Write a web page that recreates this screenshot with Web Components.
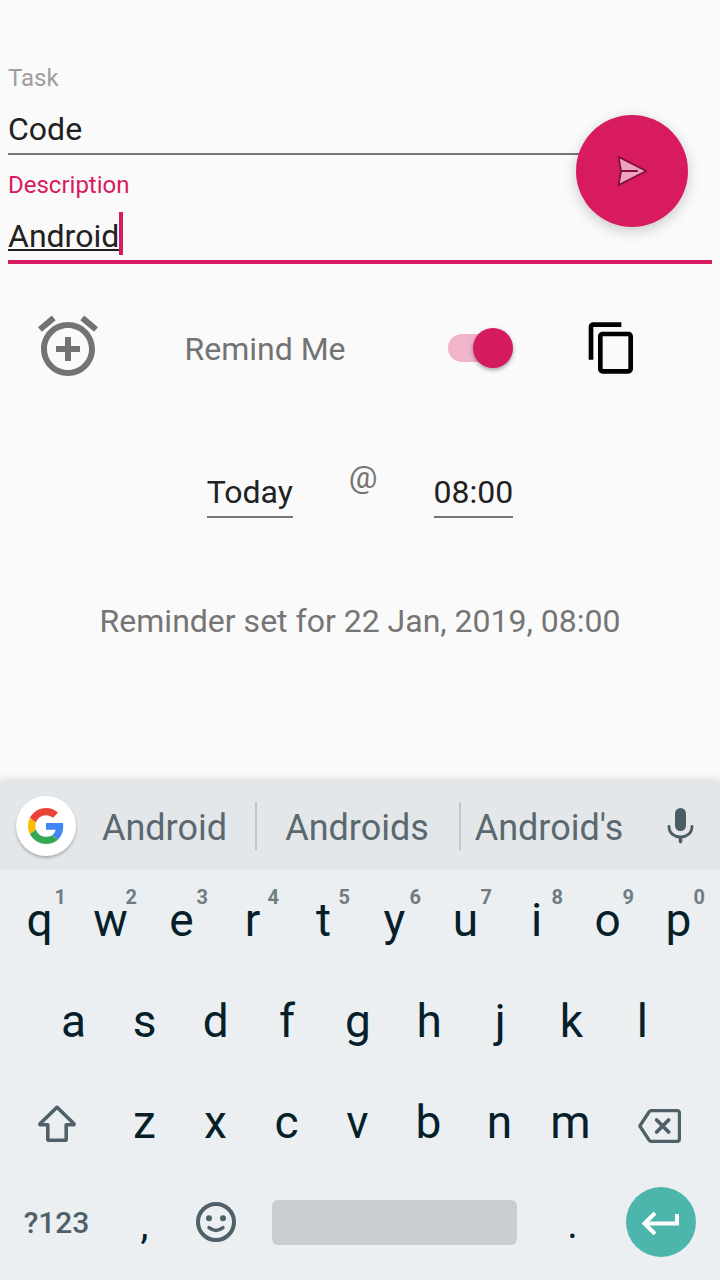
<!DOCTYPE html>
<html lang="en">
<head>
<meta charset="utf-8">
<meta name="viewport" content="width=device-width, initial-scale=1">
<title>Task</title>
<style>
  body { margin: 0; background: #fafafa; font-family: Roboto, "Liberation Sans", sans-serif; }
</style>
</head>
<body>
<task-screen></task-screen>

<script>
const define = (name, html, setup) => {
  const template = document.createElement('template');
  template.innerHTML = html;
  customElements.define(name, class extends HTMLElement {
    connectedCallback() {
      if (this.shadowRoot) return;
      this.attachShadow({ mode: 'open' }).append(template.content.cloneNode(true));
      if (setup) setup(this, this.shadowRoot);
    }
  });
};

// Labelled text field with a rule below it; "active" adds the accent colour and the caret.
define('text-field', `
  <style>
    :host { display: block; --accent: #d81b60; }
    label { display: block; font-size: 24px; line-height: 28px; color: #9e9e9e; margin-bottom: 18px; }
    .line { display: flex; align-items: flex-end; height: 38px; padding-bottom: 5px; border-bottom: 2px solid #757575; }
    input { flex: 1; min-width: 0; height: 38px; padding: 0; border: 0; outline: 0; background: none;
            font: inherit; font-size: 32px; line-height: 38px; color: #212121; }
    .caret { display: none; width: 4px; height: 43px; background: var(--accent); }
    :host([active]) label { color: var(--accent); }
    :host([active]) .line { border-bottom: 4px solid var(--accent); }
    :host([active]) input { flex: none; field-sizing: content; text-decoration: underline 2px;
                            text-underline-offset: 2px; text-decoration-skip-ink: none; }
    :host([active]) .caret { display: block; }
  </style>
  <label for="box"><slot></slot></label>
  <div class="line"><input id="box" type="text" spellcheck="false"><span class="caret"></span></div>
`, (host, root) => { root.querySelector('input').value = host.getAttribute('value'); });

// Short value sized to its text, used for the date and the time.
define('picker-field', `
  <style>
    :host { display: block; padding-top: 15px; }
    input { display: block; box-sizing: border-box; height: 45px; padding: 0 0 5px; border: 0; border-bottom: 2px solid #757575;
            border-radius: 0; outline: 0; background: none; field-sizing: content; font: inherit;
            font-size: 32px; line-height: 38px; color: #212121; }
  </style>
  <input type="text" readonly>
`, (host, root) => {
  const input = root.querySelector('input');
  input.value = host.getAttribute('value');
  input.setAttribute('aria-label', host.getAttribute('label'));
});

define('send-button', `
  <style>
    :host { display: block; }
    button { display: grid; place-items: center; width: 112px; height: 112px; padding: 0; border: 0; border-radius: 50%;
             background: #d81b60; box-shadow: 0 4px 14px rgba(0,0,0,.2); }
  </style>
  <button type="button" aria-label="Save task">
    <svg width="32" height="32" viewBox="0 0 32 32" fill="#f0a3c0" stroke="#7d1040" stroke-width="1.8" stroke-linejoin="round" stroke-linecap="round">
      <path d="M2.600 1.900 30.200 16 2.600 30.100 5 16Z"/><path d="M5 16h16" stroke-width="2.2"/>
    </svg>
  </button>
`);

define('remind-row', `
  <style>
    :host { display: grid; grid-template-columns: 136fr 258fr 172fr 92fr 62fr; align-items: center; justify-items: center; height: 76px; }
    svg { display: block; }
    .alarm { align-self: start; }
    label { font-size: 32px; line-height: 40px; padding-top: 2px; color: #737373; }
    input { appearance: none; display: grid; align-items: center; width: 65px; height: 40px; margin: 0; }
    input::before, input::after { content: ""; grid-area: 1 / 1; }
    input::before { width: 60px; height: 28px; border-radius: 14px; background: #f0b5ca; }
    input::after { width: 40px; height: 40px; border-radius: 50%; background: #bdbdbd; box-shadow: 0 2px 4px rgba(0,0,0,.35); }
    input:checked::after { justify-self: end; background: #d51b5f; }
    button { padding: 0; border: 0; background: none; }
  </style>
  <svg class="alarm" width="72" height="72" viewBox="0 0 24 24" fill="#737373"><path d="M7.88 3.39 6.6 1.86 2 5.71l1.29 1.53 4.59-3.85zM22 5.72l-4.6-3.86-1.29 1.53 4.6 3.86L22 5.72zM12 4c-4.97 0-9 4.03-9 9s4.02 9 9 9c4.97 0 9-4.03 9-9s-4.03-9-9-9zm0 16c-3.87 0-7-3.13-7-7s3.13-7 7-7 7 3.13 7 7-3.13 7-7 7zm1-11h-2v3H8v2h3v3h2v-3h3v-2h-3V9z"/></svg>
  <label for="remind">Remind Me</label>
  <input id="remind" type="checkbox" role="switch" checked>
  <button type="button" aria-label="Copy">
    <svg width="56" height="56" viewBox="0 0 24 24"><path d="M16 1H4c-1.1 0-2 .9-2 2v14h2V3h12V1zm3 4H8c-1.1 0-2 .9-2 2v14c0 1.1.9 2 2 2h11c1.1 0 2-.9 2-2V7c0-1.1-.9-2-2-2zm0 16H8V7h11v14z"/></svg>
  </button>
`);

define('suggestion-bar', `
  <style>
    :host { display: grid; grid-template-columns: 76fr 179fr 204fr 180fr 81fr; align-items: center; height: 89px; background: #e3e7ea; }
    button { padding: 0; border: 0; background: none; font: inherit; }
    svg { display: block; }
    .google { justify-self: end; display: grid; place-items: center; width: 60px; height: 60px; border-radius: 50%;
              background: #fff; box-shadow: 0 2px 3px rgba(0,0,0,.25); }
    .word { height: 48px; padding: 4px 2px 0 0; font-size: 36px; line-height: 44px; color: #5b686f; white-space: nowrap; text-align: center; }
    .word + .word { border-left: 2px solid #c3c8cb; }
    .mic { justify-self: center; }
  </style>
  <button class="google" type="button" aria-label="Google search">
    <svg width="36" height="36" viewBox="0 0 48 48">
      <path fill="#ea4335" d="M24 9.5c3.54 0 6.71 1.22 9.21 3.6l6.85-6.85C35.9 2.38 30.47 0 24 0 14.62 0 6.51 5.38 2.56 13.22l7.98 6.19C12.43 13.72 17.74 9.5 24 9.5z"/>
      <path fill="#4285f4" d="M46.98 24.55c0-1.57-.15-3.09-.38-4.55H24v9.02h12.94c-.58 2.96-2.26 5.48-4.78 7.18l7.73 6c4.51-4.18 7.09-10.36 7.09-17.65z"/>
      <path fill="#fbbc05" d="M10.53 28.59c-.48-1.45-.76-2.99-.76-4.59s.27-3.14.76-4.59l-7.98-6.19C.92 16.46 0 20.12 0 24c0 3.88.92 7.54 2.56 10.78l7.97-6.19z"/>
      <path fill="#34a853" d="M24 48c6.48 0 11.93-2.13 15.89-5.81l-7.73-6c-2.15 1.45-4.92 2.3-8.16 2.3-6.26 0-11.57-4.22-13.47-9.91l-7.98 6.19C6.51 42.62 14.62 48 24 48z"/>
    </svg>
  </button>
  <button class="word" type="button">Android</button>
  <button class="word" type="button">Androids</button>
  <button class="word" type="button">Android's</button>
  <button class="mic" type="button" aria-label="Voice input">
    <svg width="28" height="36" viewBox="0 0 28 36" fill="none" stroke="#4b5c64" stroke-linecap="round">
      <rect x="9" y="0" width="11" height="23" rx="5.5" fill="#4b5c64" stroke="none"/>
      <path d="M3 18.500c0 14 23 14 23 0" stroke-width="2.8"/><path d="M14.500 30v3.600" stroke-width="3.600"/>
    </svg>
  </button>
`);

// One key: its face is the slotted text or icon, its hint the small digit at the corner.
define('key-cap', `
  <style>
    :host { display: block; position: relative; }
    button { box-sizing: border-box; display: grid; place-items: center; width: 100%; height: 100%; padding: 0; border: 0; background: none;
             font: inherit; font-size: 46px; line-height: 52px; color: #06202a; }
    :host([kind="letter"]) button { padding-bottom: 2px; }
    :host([kind="mark"]) button { font-size: 40px; padding-top: 6px; }
    :host([kind="mode"]) button { font-size: 30px; font-weight: 500; color: #4f6068; padding-top: 2px; }
    .hint { position: absolute; top: 15px; right: 9px; font-size: 20px; line-height: 24px; font-weight: 700; color: #707c82; }
  </style>
  <button type="button"><slot></slot></button><span class="hint"></span>
`, (host, root) => {
  const hint = root.querySelector('.hint');
  if (host.hasAttribute('hint')) hint.textContent = host.getAttribute('hint'); else hint.remove();
  if (host.hasAttribute('label')) root.querySelector('button').setAttribute('aria-label', host.getAttribute('label'));
});

const keys = (letters, digits = '') => [...letters].map((c, i) =>
  `<key-cap kind="letter"${digits[i] ? ` hint="${digits[i]}"` : ''}>${c}</key-cap>`).join('');

define('soft-keyboard', `
  <style>
    :host { display: block; background: #ebeff2; box-shadow: 0 0 8px rgba(0,0,0,.18); }
    .row { display: grid; height: 101px; padding: 0 6px 0 4px; }
    .one { grid-template-columns: repeat(10, 1fr); }
    .two { grid-template-columns: repeat(9, 1fr); padding: 0 42px 0 38px; }
    .three { grid-template-columns: 105fr repeat(7, 71fr) 108fr; }
    .four { grid-template-columns: 105fr 71fr 71fr 286fr 71fr 106fr; height: 98px; padding-bottom: 9px; }
    svg { display: block; }
    .space { align-self: center; height: 45px; margin: 0 20px 0 21px; padding: 0; border: 0; border-radius: 6px; background: #c9cdd0; }
    .enter { display: grid; place-items: center; width: 70px; height: 70px; border-radius: 50%; background: #4db6ac; }
  </style>
  <suggestion-bar></suggestion-bar>
  <div class="row one">${keys('qwertyuiop', '1234567890')}</div>
  <div class="row two">${keys('asdfghjkl')}</div>
  <div class="row three">
    <key-cap label="Shift"><svg width="40" height="40" viewBox="0 0 40 40" fill="none" stroke="#4f6068" stroke-width="3.6" stroke-linejoin="round"><path d="M20 4.300 3 20.800v1h7.800v14.400q0 1 1 1h16.400q1 0 1-1V21.800H37v-1Z"/></svg></key-cap>
    ${keys('zxcvbnm')}
    <key-cap label="Backspace"><svg width="44" height="42" viewBox="0 -6 44 42" fill="none" stroke="#4f6068" stroke-width="3.2" stroke-linejoin="round"><path d="M13 2.600h26q2.400 0 2.400 2.400v26q0 2.400-2.400 2.400H13q-1 0-2-1.400L1.800 18 11 4q1-1.400 2-1.400Z"/><path d="m18.600 12 12 12m0-12-12 12" stroke-width="3.8" stroke-linecap="round"/></svg></key-cap>
  </div>
  <div class="row four">
    <key-cap kind="mode">?123</key-cap>
    <key-cap kind="mark">,</key-cap>
    <key-cap label="Emoji"><svg width="40" height="40" viewBox="0 0 40 40" fill="none" stroke="#4f6068"><circle cx="20" cy="20" r="18" stroke-width="4"/><path d="M13 25.600q7 5.600 14 0" stroke-width="3.4" stroke-linecap="round"/><g fill="#4f6068" stroke="none"><circle cx="13" cy="16.300" r="3"/><circle cx="27" cy="16.300" r="3"/></g></svg></key-cap>
    <button class="space" type="button" aria-label="Space"></button>
    <key-cap kind="mark">.</key-cap>
    <key-cap label="Enter"><span class="enter"><svg width="40" height="26" viewBox="0 0 40 26" fill="none" stroke="#fff" stroke-width="4"><path d="M3.500 14.500H36V5"/><path d="M14 4 3.500 14.500 14 25"/></svg></span></key-cap>
  </div>
`);

define('task-screen', `
  <style>
    :host { display: flex; flex-direction: column; min-height: 100vh; overflow: hidden; }
    main { flex: 1; padding-top: 64px; }
    .fields { position: relative; display: grid; gap: 16px; padding: 0 8px; margin-bottom: 46px; }
    .beside { margin-right: 80px; }
    send-button { position: absolute; top: 51px; right: 32px; }
    .when { display: flex; justify-content: center; gap: 56px; margin: 72px 0 84px; }
    .at, p { margin: 0; font-size: 32px; line-height: 38px; color: #757575; text-align: center; }
  </style>
  <main>
    <div class="fields">
      <text-field class="beside" value="Code">Task</text-field>
      <text-field value="Android" active>Description</text-field>
      <send-button></send-button>
    </div>
    <remind-row></remind-row>
    <div class="when">
      <picker-field label="Date" value="Today"></picker-field>
      <span class="at">@</span>
      <picker-field label="Time" value="08:00"></picker-field>
    </div>
    <p>Reminder set for 22 Jan, 2019, 08:00</p>
  </main>
  <soft-keyboard></soft-keyboard>
`);
</script>
</body>
</html>
